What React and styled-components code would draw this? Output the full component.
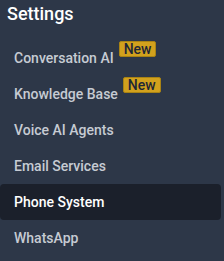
import React from "react";
import styled, { createGlobalStyle } from "styled-components";

const Global = createGlobalStyle`
  html, body { margin: 0; padding: 0; background: #2d3748; }
  body { font-family: Roboto, "Liberation Sans", sans-serif; -webkit-font-smoothing: antialiased; }
`;

const Sidebar = styled.nav`
  width: 224px;
  height: 261px;
  background: #2d3748;
  box-sizing: border-box;
  padding-right: 3px;
  overflow: hidden;
`;

const Title = styled.h2`
  margin: 0;
  height: 40px;
  box-sizing: border-box;
  padding: 2px 0 0 7px;
  font-size: 18px;
  font-weight: 500;
  line-height: 24px;
  color: #ffffff;
`;

const List = styled.ul`
  list-style: none;
  margin: 0;
  padding: 0;
`;

const Item = styled.li`
  height: 36px;
  display: flex;
  align-items: center;
  padding-left: 14px;
  border-radius: 4px;
  font-size: 14px;
  font-weight: 500;
  color: ${(p) => (p.$active ? "#ffffff" : "#c6cbd3")};
  background: ${(p) => (p.$active ? "#1b202b" : "transparent")};
`;

const Badge = styled.span`
  align-self: flex-start;
  margin: 1px 0 0 5px;
  height: 16px;
  box-sizing: border-box;
  padding: 0 4px;
  display: inline-flex;
  align-items: center;
  background: #d2a11d;
  border: 1px solid #a98314;
  border-radius: 2px;
  color: #1e2636;
  font-size: 14px;
  font-weight: 500;
  line-height: 14px;
`;

const items = [
  { label: "Conversation AI", badge: "New" },
  { label: "Knowledge Base", badge: "New" },
  { label: "Voice AI Agents" },
  { label: "Email Services" },
  { label: "Phone System", active: true },
  { label: "WhatsApp" },
];

export default function App() {
  return (
    <>
      <Global />
      <Sidebar>
        <Title>Settings</Title>
        <List>
          {items.map((it) => (
            <Item key={it.label} $active={it.active}>
              {it.label}
              {it.badge && <Badge>{it.badge}</Badge>}
            </Item>
          ))}
        </List>
      </Sidebar>
    </>
  );
}
